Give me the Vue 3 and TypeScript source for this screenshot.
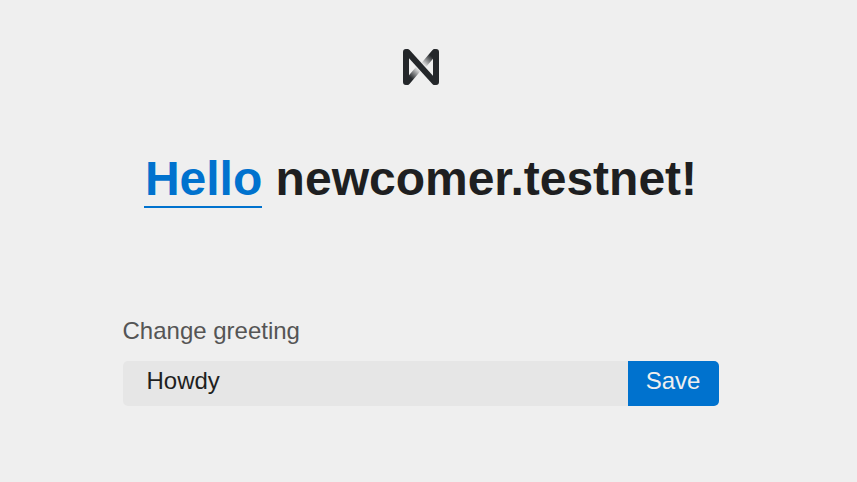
<script setup lang="ts">
import { ref } from 'vue'

const greeting = ref<string>('Hello')
const draft = ref<string>('Howdy')
const accountId = 'newcomer.testnet'

function save(): void {
  greeting.value = draft.value
}
</script>

<template>
  <main class="page">
    <svg class="logo" viewBox="0 0 36 36" aria-hidden="true">
      <defs>
        <linearGradient id="fade-top" gradientUnits="userSpaceOnUse" x1="31" y1="4" x2="20" y2="16">
          <stop offset="0.25" stop-color="#24272a" />
          <stop offset="1" stop-color="#24272a" stop-opacity="0" />
        </linearGradient>
        <linearGradient id="fade-bottom" gradientUnits="userSpaceOnUse" x1="5" y1="32" x2="16" y2="20">
          <stop offset="0.25" stop-color="#24272a" />
          <stop offset="1" stop-color="#24272a" stop-opacity="0" />
        </linearGradient>
      </defs>
      <path class="stroke" stroke="url(#fade-top)" d="M31.6 3.2L19 18" />
      <path class="stroke" stroke="url(#fade-bottom)" d="M4.4 32.8L17 18" />
      <path class="stroke" stroke="#24272a" d="M3 32.9V3.1M33 32.9V3.1" />
      <path class="stroke" stroke="#24272a" d="M4.4 3.1L31.6 32.9" />
    </svg>
    <h1 class="title"><span class="greeting">{{ greeting }}</span> {{ accountId }}!</h1>
    <form class="form" @submit.prevent="save">
      <label class="label" for="greeting">Change greeting</label>
      <div class="row">
        <input id="greeting" v-model="draft" class="input" autocomplete="off" />
        <button class="save" type="submit">Save</button>
      </div>
    </form>
  </main>
</template>

<style>
body {
  background: #efefef;
}
</style>

<style scoped>
.page {
  box-sizing: border-box;
  width: 596px;
  height: 482px;
  margin-left: 123px;
  padding-top: 49px;
  display: flex;
  flex-direction: column;
  align-items: center;
  font-family: "Nimbus Sans", "Liberation Sans", Arial, sans-serif;
  color: #1e1f21;
}
.logo {
  display: block;
  width: 36px;
  height: 36px;
  flex: none;
}
.stroke {
  fill: none;
  stroke-width: 6;
  stroke-linecap: round;
  stroke-linejoin: round;
}
.title {
  margin: 66px 0 0;
  font-size: 48px;
  line-height: 55px;
  font-weight: 700;
  white-space: nowrap;
}
.greeting {
  display: inline-block;
  margin-left: -1px;
  padding-left: 1px;
  border-bottom: 2px solid #0072ce;
  color: #0072ce;
}
.form {
  width: 100%;
  margin-top: 109px;
}
.label {
  display: block;
  margin-left: -0.5px;
  font-size: 24px;
  line-height: 28px;
  color: #555;
}
.row {
  display: flex;
  height: 45px;
  margin-top: 16px;
}
.input {
  box-sizing: border-box;
  flex: 1;
  min-width: 0;
  border: 0;
  border-radius: 5px 0 0 5px;
  padding: 0 24px 6px 23.5px;
  background: #e6e6e6;
  color: #1e1f21;
  font: 24px "Nimbus Sans", "Liberation Sans", Arial, sans-serif;
  outline: none;
}
.save {
  box-sizing: border-box;
  width: 91px;
  border: 0;
  border-radius: 0 5px 5px 0;
  padding: 0 1px 6px 0;
  background: #0072ce;
  color: #efefef;
  font: 24px "Nimbus Sans", "Liberation Sans", Arial, sans-serif;
}
</style>
